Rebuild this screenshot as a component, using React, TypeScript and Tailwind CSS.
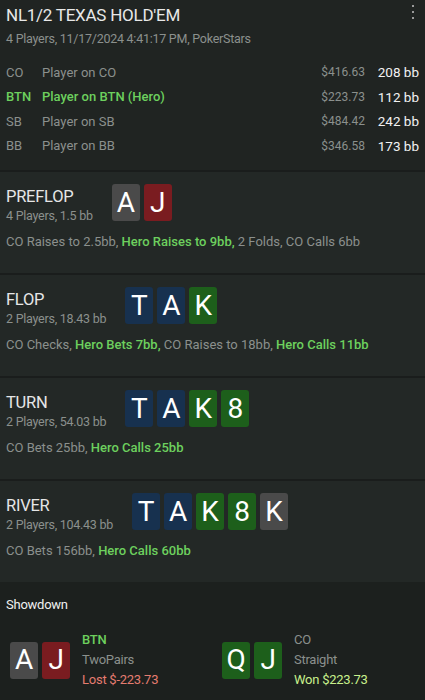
import type { ReactNode } from 'react'

type CardColor = 'gray' | 'red' | 'navy' | 'green'

const CARD_BG: Record<CardColor, string> = {
  gray: 'bg-[#4a4a4a]',
  red: 'bg-[#7a1c20]',
  navy: 'bg-[#17314f]',
  green: 'bg-[#1d5f1b]',
}

const players = [
  { pos: 'CO', name: 'Player on CO', stack: '$416.63', bb: '208 bb', hero: false },
  { pos: 'BTN', name: 'Player on BTN (Hero)', stack: '$223.73', bb: '112 bb', hero: true },
  { pos: 'SB', name: 'Player on SB', stack: '$484.42', bb: '242 bb', hero: false },
  { pos: 'BB', name: 'Player on BB', stack: '$346.58', bb: '173 bb', hero: false },
]

function Card({ rank, color }: { rank: string; color: CardColor }) {
  return (
    <div
      className={`flex h-[37px] w-[28px] items-center justify-center rounded-[3px] text-[28px] leading-none text-white ${CARD_BG[color]}`}
    >
      {rank}
    </div>
  )
}

function Hero({ children }: { children: ReactNode }) {
  return <span className="font-medium text-[#6dd05e]">{children}</span>
}

function Street({
  name,
  info,
  cards,
  actions,
}: {
  name: string
  info: string
  cards: [string, CardColor][]
  actions: ReactNode
}) {
  return (
    <section className="h-[103px] border-t-2 border-[#1a1d1c] bg-[#232826] px-[6px] pt-[12px]">
      <div className="flex items-start gap-[19px]">
        <div className="mt-[3px] flex flex-col">
          <span className="text-[16.5px] leading-[20px] text-[#e6e6e6]">{name}</span>
          <span className="text-[12.5px] leading-[18px] text-[#8b908d]">{info}</span>
        </div>
        <div className="flex gap-[4px]">
          {cards.map(([r, c], i) => (
            <Card key={i} rank={r} color={c} />
          ))}
        </div>
      </div>
      <p className="mt-[8px] text-[13px] leading-[18px] tracking-normal text-[#8b908d]">
        {actions}
      </p>
    </section>
  )
}

export default function App() {
  return (
    <div
      className="h-[700px] w-[425px] overflow-hidden bg-[#1c201e] tracking-[-0.25px]"
      style={{ fontFamily: 'Roboto, "Noto Sans", sans-serif' }}
    >
      <header className="relative h-[170px] bg-[#202422] px-[6px] pt-[3px]">
        <h1 className="text-[17px] leading-[24px] text-[#e8e8e8]">NL1/2 TEXAS HOLD'EM</h1>
        <p className="mt-[3px] text-[12.5px] leading-[18px] text-[#8b908d]">
          4 Players, 11/17/2024 4:41:17 PM, PokerStars
        </p>
        <div className="absolute right-[11px] top-[5px] flex flex-col gap-[4px]">
          <span className="h-[2px] w-[2px] bg-[#9a9a9a]" />
          <span className="h-[2px] w-[2px] bg-[#9a9a9a]" />
          <span className="h-[2px] w-[2px] bg-[#9a9a9a]" />
        </div>
        <div className="mt-[12px] flex flex-col">
          {players.map((p) => (
            <div key={p.pos} className="flex h-[24.5px] items-center text-[13px] tracking-normal">
              <span
                className={`w-[36px] ${p.hero ? 'font-medium text-[#6dd05e]' : 'text-[#8b908d]'}`}
              >
                {p.pos}
              </span>
              <span
                className={`flex-1 ${p.hero ? 'font-medium text-[#6dd05e]' : 'text-[#8b908d]'}`}
              >
                {p.name}
              </span>
              <span className="text-[12px] text-[#8b908d]">{p.stack}</span>
              <span className="w-[54px] text-right text-[13.5px] text-[#f2f2f2]">{p.bb}</span>
            </div>
          ))}
        </div>
      </header>

      <Street
        name="PREFLOP"
        info="4 Players, 1.5 bb"
        cards={[
          ['A', 'gray'],
          ['J', 'red'],
        ]}
        actions={
          <>
            CO Raises to 2.5bb, <Hero>Hero Raises to 9bb,</Hero> 2 Folds, CO Calls 6bb
          </>
        }
      />
      <Street
        name="FLOP"
        info="2 Players, 18.43 bb"
        cards={[
          ['T', 'navy'],
          ['A', 'navy'],
          ['K', 'green'],
        ]}
        actions={
          <>
            CO Checks, <Hero>Hero Bets 7bb,</Hero> CO Raises to 18bb, <Hero>Hero Calls 11bb</Hero>
          </>
        }
      />
      <Street
        name="TURN"
        info="2 Players, 54.03 bb"
        cards={[
          ['T', 'navy'],
          ['A', 'navy'],
          ['K', 'green'],
          ['8', 'green'],
        ]}
        actions={
          <>
            CO Bets 25bb, <Hero>Hero Calls 25bb</Hero>
          </>
        }
      />
      <Street
        name="RIVER"
        info="2 Players, 104.43 bb"
        cards={[
          ['T', 'navy'],
          ['A', 'navy'],
          ['K', 'green'],
          ['8', 'green'],
          ['K', 'gray'],
        ]}
        actions={
          <>
            CO Bets 156bb, <Hero>Hero Calls 60bb</Hero>
          </>
        }
      />

      <section className="bg-[#1c201e] px-[6px] pt-[14px]">
        <h2 className="text-[13px] leading-[18px] text-[#f0f0f0]">Showdown</h2>
        <div className="mt-[16px] flex">
          <div className="flex w-[216px] items-center pl-[4px]">
            <div className="flex gap-[4px]">
              <Card rank="A" color="gray" />
              <Card rank="J" color="red" />
            </div>
            <div className="ml-[12px] flex flex-col text-[13px] leading-[20px]">
              <span className="font-medium text-[#6dd05e]">BTN</span>
              <span className="text-[#8b908d]">TwoPairs</span>
              <span className="text-[#e47c70]">Lost $-223.73</span>
            </div>
          </div>
          <div className="flex items-center">
            <div className="flex gap-[4px]">
              <Card rank="Q" color="green" />
              <Card rank="J" color="green" />
            </div>
            <div className="ml-[12px] flex flex-col text-[13px] leading-[20px]">
              <span className="text-[#8b908d]">CO</span>
              <span className="text-[#8b908d]">Straight</span>
              <span className="text-[#c8f08c]">Won $223.73</span>
            </div>
          </div>
        </div>
      </section>
    </div>
  )
}
